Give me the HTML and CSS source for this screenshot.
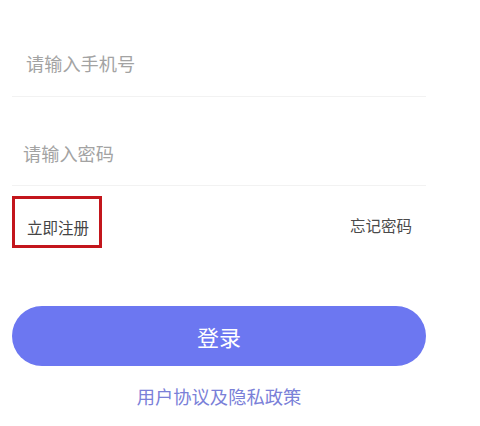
FILE: index.html
```html
<!DOCTYPE html>
<html lang="zh">
<head>
<meta charset="utf-8">
<link rel="stylesheet" href="styles.css">
</head>
<body>
<div class="form">
  <div class="field field-phone"><span class="placeholder">请输入手机号</span></div>
  <div class="field field-pwd"><span class="placeholder">请输入密码</span></div>
  <div class="links">
    <span class="register">立即注册</span>
    <span class="forgot">忘记密码</span>
  </div>
  <div class="login-btn">登录</div>
  <div class="agreement">用户协议及隐私政策</div>
</div>
</body>
</html>
```
FILE: styles.css
```css
html, body {
  margin: 0;
  padding: 0;
  background: #ffffff;
}
body {
  font-family: "Noto Sans CJK SC", "Noto Sans", sans-serif;
}
.form {
  width: 414px;
  margin-left: 12px;
}
.field {
  border-bottom: 1px solid #f2f2f2;
  font-size: 18.2px;
  line-height: 24px;
  color: #a3a3a3;
}
.field-phone {
  padding: 51px 0 21px 14px;
}
.field-pwd {
  padding: 44px 0 20px 11px;
}
.links {
  display: flex;
  justify-content: space-between;
  align-items: flex-start;
  margin-top: 10px;
  font-size: 15.5px;
  line-height: 20px;
  color: #444444;
}
.register {
  box-sizing: border-box;
  width: 90px;
  height: 52px;
  border: 3px solid #c3161c;
  padding: 18px 0 0 12px;
}
.forgot {
  margin-top: 19px;
  margin-right: 14px;
  color: #4a4a4a;
}
.login-btn {
  margin-top: 58px;
  height: 60px;
  border-radius: 30px;
  background: #6c77f1;
  color: #ffffff;
  font-size: 22px;
  display: flex;
  align-items: center;
  justify-content: center;
}
.agreement {
  margin-top: 18px;
  text-align: center;
  font-size: 18.3px;
  line-height: 24px;
  color: #7a80d8;
}
```
